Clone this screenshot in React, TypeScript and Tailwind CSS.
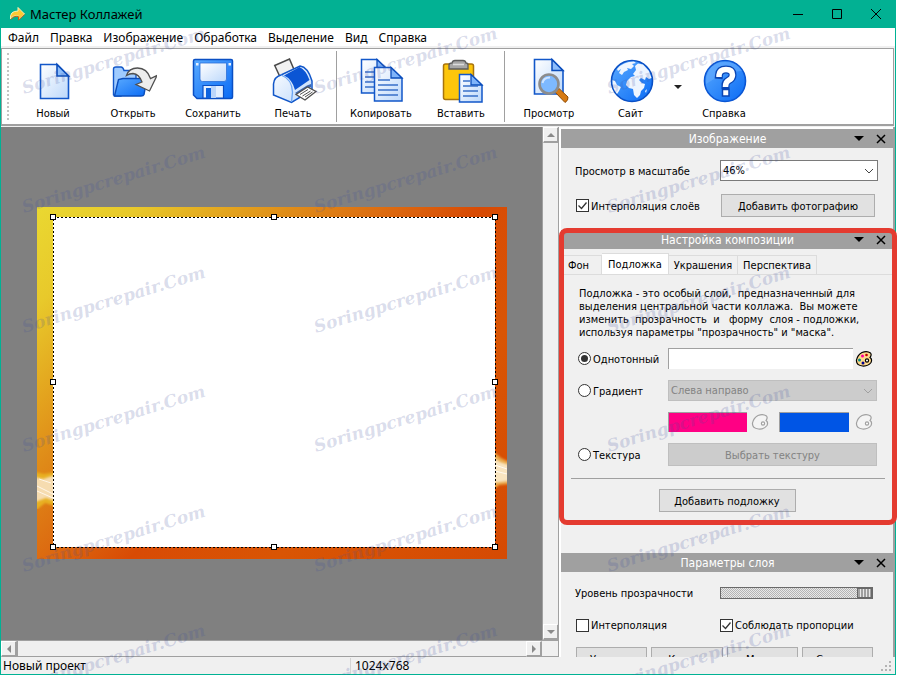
import React, { useState } from 'react';

const TAHOMA = "font-['DejaVu_Sans_Condensed','DejaVu_Sans',sans-serif]";
const SEGOE = "font-['Noto_Sans','Open_Sans',sans-serif]";

const MENU = ['Файл', 'Правка', 'Изображение', 'Обработка', 'Выделение', 'Вид', 'Справка'];
const TABS = ['Фон', 'Подложка', 'Украшения', 'Перспектива'];

const NewIcon = () => (
  <svg viewBox="0 0 48 48" className="size-12">
    <path d="M11.5 7.5H28L39.5 19V41.5H11.5Z" fill="url(#paper)" stroke="#1257c9" strokeWidth="1.6" />
    <path d="M28 7.5V19H39.5Z" fill="#8dbdfb" stroke="#0b4dbb" strokeWidth="1.6" />
  </svg>
);

const OpenIcon = () => (
  <svg viewBox="0 0 48 48" className="size-12">
    <path d="M4.5 38V12Q4.5 10 7 10H12Q14 10 15 13.5H27V22L12 39H6Z" fill="#9fcbff" stroke="#1257c9" strokeWidth="1.4" />
    <path d="M5.5 39L9.5 22.5L14 21.5H38L35 37.5Q34.5 39 32 39Z" fill="url(#blue)" stroke="#0b4dbb" strokeWidth="1.4" />
    <path d="M17.5 18.5Q20 11 28.5 11Q38 11 41.5 21.5L48 18.5L40.5 34L27 27.5L33 25Q30 17 24 16.5Q20.5 16.5 17.5 18.5Z" fill="#ededed" stroke="#505050" strokeWidth="1.3" />
  </svg>
);

const SaveIcon = () => (
  <svg viewBox="0 0 48 48" className="size-12">
    <path d="M6 2.5H42Q43.5 2.5 43.5 4V40Q43.5 41.5 42 41.5H8L4.5 38V4Q4.5 2.5 6 2.5Z" fill="url(#blue)" stroke="#0a4fc4" strokeWidth="1.5" />
    <path d="M11 6H37.5V22Q37.5 24.5 35 24.5H13.5Q11 24.5 11 22Z" fill="url(#paper)" stroke="#2b6fd8" strokeWidth=".8" />
    <path d="M7 6h2.5v2.5H7zM39.5 6H42v2.5h-2.5z" fill="#e8f1ff" />
    <path d="M14 41V28.5H34.5V41Z" fill="#e3efff" stroke="#0a4fc4" strokeWidth="1.2" />
    <path d="M17 31H22V41H17Z" fill="#0d63df" />
    <path d="M22 29H27V41H22Z" fill="#bcd6fa" />
  </svg>
);

const PrintIcon = () => (
  <svg viewBox="0 0 48 48" className="size-12">
    <path d="M5.7 8.5L20.5 2L26 15L12 22Z" fill="#f1f1f1" stroke="#4a4a4a" strokeWidth="1.5" />
    <path d="M4.5 27Q5 20 12 18L31 9Q39 10 43 24V33L22.5 45.5L4.5 38Z" fill="url(#paper)" stroke="#1257c9" strokeWidth="1.5" />
    <path d="M15 18.5L30.5 10Q37 13 40.5 23L26 33Q23 22 15 18.5Z" fill="#0b55d4" />
    <path d="M12 18Q23 22 23.5 35L22.5 45" fill="none" stroke="#6ba5f3" strokeWidth="1.3" />
    <path d="M26 36L38 28.5L42 27V30L29 38Z" fill="#3d67ad" />
    <path d="M27 37.5L38.5 30L47 34.5L36 43Z" fill="#fff" stroke="#505050" strokeWidth="1.3" />
    <path d="M31 37.5L39 32.5M33.5 39L41.5 34M36 40L43.5 35" stroke="#505050" />
  </svg>
);

const Sheet = ({ x, y, w, h }: { x: number; y: number; w: number; h: number }) => (
  <g transform={`translate(${x} ${y})`}>
    <path d={`M.5 .5H${w - 11}L${w} 11V${h}H.5Z`} fill="url(#paper)" stroke="#1257c9" strokeWidth="1.5" />
    <path d={`M${w - 11} .5V11H${w}Z`} fill="#7fb4fa" stroke="#0b4dbb" strokeWidth="1.3" />
    {[0, 1, 2, 3].map((i) => (
      <path key={i} d={`M4 ${h - 6 - i * 5}H${i === 3 ? w - 12 : w - 4}`} stroke="#2b66c4" strokeWidth="1.4" />
    ))}
  </g>
);

const CopyIcon = () => (
  <svg viewBox="0 0 48 48" className="size-12">
    <Sheet x={4} y={2} w={27} h={34} />
    <Sheet x={17} y={10} w={28} h={34} />
  </svg>
);

const PasteIcon = () => (
  <svg viewBox="0 0 48 48" className="size-12">
    <rect x="6.5" y="7" width="30" height="35.5" rx="2" fill="#fdc60b" stroke="#a8730c" strokeWidth="1.5" />
    <path d="M12 12V8Q12 6 15 6Q15.5 3.5 18 3.5H26Q28.5 3.5 29 6Q31 6 31 8V12Z" fill="#a6a6a6" stroke="#5c5c5c" strokeWidth="1.3" />
    <path d="M16 7.5H27" stroke="#dcdcdc" strokeWidth="1.5" />
    <Sheet x={22} y={17} w={23} h={28} />
  </svg>
);

const PreviewIcon = () => (
  <svg viewBox="0 0 48 48" className="size-12">
    <path d="M9.5 2.5H27L38 13.5V37H9.5Z" fill="url(#paper)" stroke="#1257c9" strokeWidth="1.6" />
    <path d="M27 2.5V13.5H38Z" fill="#8dbdfb" stroke="#0b4dbb" strokeWidth="1.5" />
    <path d="M30 35L34 31.5L43 40Q43.5 43.5 40 45.5Z" fill="#d77a12" stroke="#8f4d09" />
    <circle cx="24" cy="27" r="9.5" fill="#7db9ff" stroke="#8c8c8c" strokeWidth="2.6" />
    <path d="M17.5 26Q18.5 20.5 25 20.5" fill="none" stroke="#cfe4ff" strokeWidth="2" />
  </svg>
);

const GlobeIcon = () => (
  <svg viewBox="0 0 48 48" className="size-12">
    <circle cx="25" cy="24" r="20.5" fill="url(#blue)" stroke="#0a4fc4" strokeWidth="1.6" />
    <path d="M10 12Q16 4.5 27 4.5L29 6L25 7L27 9L24 12L20 11L21 13L17 15L15 18L12 16L14 12L11 14Z" fill="#eef5ff" />
    <path d="M5.5 23L8 24L10 28L14 30L12 34L10 37Q5 31 5.5 23Z" fill="#eef5ff" />
    <path d="M31 6.5L36 7.5L42 14L44.5 21L42 22L39 20L38 23L34 21L32 23L35 26L38 27L37 31L34 34L33 38L30 41L27 38L26 32L22 31L19 28L20 24L24 20L28 19L26 17L29 13L28 9Z" fill="#eef5ff" />
    <path d="M38 34L40 32L39 36Z" fill="#eef5ff" />
  </svg>
);

const HelpIcon = () => (
  <svg viewBox="0 0 48 48" className="size-12">
    <circle cx="25" cy="24" r="20.5" fill="url(#blue)" stroke="#0a56d4" strokeWidth="1.6" />
    <path d="M6 27Q6 6 25 5Q37 5 42 14Q24 14 6 27Z" fill="#6cb0ff" opacity=".5" />
    <path d="M19 18Q19.5 12.5 26 12.5Q32.5 12.500 32.5 18Q32.5 21.5 28.5 23.500Q25.5 25 25.5 28" fill="none" stroke="#0a46b4" strokeWidth="8" strokeLinecap="square" />
    <path d="M22.5 32.5h6.5v6.5h-6.5z" fill="#fff" stroke="#0a46b4" strokeWidth="1.5" />
    <path d="M19 20V18Q19.5 12.5 26 12.5Q32.5 12.5 32.5 18Q32.5 21.5 28.5 23.5Q25.5 25 25.5 30" fill="none" stroke="#fff" strokeWidth="5.5" />
  </svg>
);

const TOOLS: { label: string; icon: React.FC; sep?: boolean; arrow?: boolean }[] = [
  { label: 'Новый', icon: NewIcon },
  { label: 'Открыть', icon: OpenIcon },
  { label: 'Сохранить', icon: SaveIcon },
  { label: 'Печать', icon: PrintIcon, sep: true },
  { label: 'Копировать', icon: CopyIcon },
  { label: 'Вставить', icon: PasteIcon, sep: true },
  { label: 'Просмотр', icon: PreviewIcon },
  { label: 'Сайт', icon: GlobeIcon, arrow: true },
  { label: 'Справка', icon: HelpIcon },
];

const SharedDefs = () => (
  <svg className="absolute size-0">
    <defs>
      <linearGradient id="paper" x1="0" y1="0" x2="1" y2="1">
        <stop offset="0" stopColor="#ffffff" />
        <stop offset="1" stopColor="#bcd8fb" />
      </linearGradient>
      <linearGradient id="blue" x1="0" y1="0" x2="1" y2="1">
        <stop offset="0" stopColor="#5aaaff" />
        <stop offset="1" stopColor="#0a6bf5" />
      </linearGradient>
    </defs>
  </svg>
);

const Palette = ({ disabled }: { disabled?: boolean }) => (
  <svg viewBox="0 0 18 16" className="h-4 w-[18px]">
    <path
      d="M7 1.5Q12 -.5 15.5 2Q17 4 15 6.5Q17.5 8 16 11.5Q13 15.5 7.5 15Q1 14 1.5 9Q2.5 4 7 1.5Z"
      fill={disabled ? '#f4f4f4' : '#ffd98a'}
      stroke={disabled ? '#a0a0a0' : '#000'}
      strokeWidth="1.2"
    />
    {!disabled && (
      <>
        <circle cx="7.5" cy="5" r="1.5" fill="#ff00a0" />
        <circle cx="11.5" cy="4" r="1.3" fill="#c00000" />
        <circle cx="4.5" cy="9" r="1.5" fill="#008a8a" />
        <circle cx="8" cy="12" r="1.5" fill="#000090" />
      </>
    )}
    <circle cx="12" cy="9.5" r="1.6" fill="#fff" stroke={disabled ? '#a0a0a0' : '#000'} strokeWidth="1.2" />
  </svg>
);

const PanelHeader = ({ title }: { title: string }) => (
  <header className={`flex h-[19px] shrink-0 items-center bg-[#a0a0a0] pr-[7px] pl-10 text-xs text-white ${TAHOMA}`}>
    <h2 className="flex-1 text-center">{title}</h2>
    <button aria-label="Свернуть" className="mr-3">
      <svg viewBox="0 0 10 10" className="size-2.5"><path d="M0 2H10L5 7Z" fill="#000" /></svg>
    </button>
    <button aria-label="Закрыть">
      <svg viewBox="0 0 10 10" className="size-2.5"><path d="M1 1L9 9M9 1L1 9" stroke="#000" strokeWidth="1.5" /></svg>
    </button>
  </header>
);

const CheckBox = ({ label, defaultChecked }: { label: string; defaultChecked?: boolean }) => (
  <label className="flex items-center gap-0.5">
    <span className="grid">
      <input type="checkbox" defaultChecked={defaultChecked} className="peer size-[13px] appearance-none border border-[#333] bg-white [grid-area:1/1]" />
      <svg viewBox="0 0 13 13" className="pointer-events-none hidden size-[13px] [grid-area:1/1] peer-checked:block">
        <path d="M2.5 6.5L5.5 9.5L10.5 3.5" fill="none" stroke="#333" strokeWidth="1.3" />
      </svg>
    </span>
    <span className="pt-0.5">{label}</span>
  </label>
);

const Radio = ({ label, checked, onChange }: { label: string; checked: boolean; onChange: () => void }) => (
  <label className="flex w-[90px] shrink-0 items-center gap-0.5">
    <span className="grid">
      <input type="radio" name="fill" checked={checked} onChange={onChange} className="peer size-[13px] appearance-none rounded-full border border-[#333] bg-white [grid-area:1/1]" />
      <span className="pointer-events-none hidden size-[7px] place-self-center rounded-full bg-[#333] [grid-area:1/1] peer-checked:block" />
    </span>
    <span className="pt-0.5">{label}</span>
  </label>
);

const Select = ({ value, label, disabled }: { value: string; label: string; disabled?: boolean }) => (
  <div className="grid flex-1">
    <select
      aria-label={label}
      disabled={disabled}
      className="h-[21px] w-full appearance-none border border-[#7a7a7a] bg-white px-0.5 leading-none [grid-area:1/1] disabled:border-[#bfbfbf] disabled:bg-[#cccccc] disabled:text-[#838383] disabled:opacity-100"
    >
      <option>{value}</option>
    </select>
    <svg viewBox="0 0 10 6" className="pointer-events-none mr-1 h-1.5 w-2.5 self-center justify-self-end [grid-area:1/1]">
      <path d="M1 1L5 5L9 1" fill="none" stroke={disabled ? '#a0a0a0' : '#444'} />
    </svg>
  </div>
);

const Button = ({ className = '', ...rest }: React.ButtonHTMLAttributes<HTMLButtonElement>) => (
  <button {...rest} className={`h-[23px] border border-[#adadad] bg-[#e1e1e1] pt-0.5 disabled:border-[#bfbfbf] disabled:bg-[#cccccc] disabled:text-[#838383] ${className}`} />
);

const ScrollButton = ({ label, d }: { label: string; d: string }) => (
  <button aria-label={label} className="grid size-4 shrink-0 place-items-center border border-r-2 border-b-2 border-[#a0a0a0] border-t-white border-l-white bg-[#f0f0f0]">
    <svg viewBox="0 0 8 8" className="size-2"><path d={d} fill="#8a8a8a" /></svg>
  </button>
);

const HANDLES = [
  'left-0 top-0', 'left-1/2 top-0', 'left-full top-0',
  'left-0 top-1/2', 'left-full top-1/2',
  'left-0 top-full', 'left-1/2 top-full', 'left-full top-full',
];

const Collage = () => (
  <div className="relative h-[352px] w-[470px] bg-[linear-gradient(135deg,#ead831_0%,#e8c92b_12%,#e3a31e_24%,#df8a18_32%,#dc6810_44%,#d84b05_54%,#d95504_72%,#d54a03_100%)] pt-2.5 pr-3 pb-3 pl-4">
    <svg viewBox="0 0 16 40" className="absolute top-[262px] left-0 h-10 w-4">
      <g className="blur-[1px]">
        <path d="M-2 3L7 5L18 3V37L8 34L-2 42Z" fill="#e8b022" />
        <path d="M-2 8L6 10L18 6V32L9 29L-2 33Z" fill="#f6dcb0" />
      </g>
      <path d="M0 17L16 25M0 22L16 29M2 10L14 14" stroke="#fff6e8" />
    </svg>
    <svg viewBox="0 0 12 40" className="absolute top-[244px] right-0 h-10 w-3">
      <g className="blur-[1px]">
        <path d="M-2 0L6 7L14 11V33L4 34L-2 39Z" fill="#e9a94a" />
        <path d="M-2 6L5 11L14 14V30L-2 32Z" fill="#f9e5c0" />
      </g>
      <path d="M0 14L12 18M0 20L12 23" stroke="#fffaf0" />
    </svg>
    <div className="relative h-full bg-white">
      <svg className="absolute inset-0 size-full overflow-visible">
        <rect width="100%" height="100%" fill="none" stroke="#000" strokeWidth="1" strokeDasharray="2 2" shapeRendering="crispEdges" />
      </svg>
      {HANDLES.map((pos) => (
        <span key={pos} className={`absolute size-1.5 -translate-1/2 border border-black bg-white ${pos}`} />
      ))}
    </div>
  </div>
);

const Watermark = () => (
  <svg className="pointer-events-none absolute inset-0 size-full" aria-hidden="true">
    {[94, 213, 333, 452, 572, 691].flatMap((y) =>
      [24, 316, 609].map((x) => (
        <text
          key={`${x}-${y}`}
          transform={`translate(${x} ${y}) rotate(-17)`}
          className="fill-[#3f4f9e]/20 font-['DejaVu_Serif',serif] text-[17px] font-bold italic"
        >
          Soringpcrepair.Com
        </text>
      ))
    )}
  </svg>
);

const App = () => {
  const [tab, setTab] = useState('Подложка');
  const [fill, setFill] = useState('solid');

  return (
    <div className="relative h-screen overflow-hidden bg-white pr-0.5 text-black">
      <SharedDefs />
      <div className={`flex h-full flex-col border border-t-0 border-[#00b294] bg-[#f0f0f0] ${SEGOE}`}>
        <header className="flex h-7 shrink-0 items-center bg-[#02b193] pl-2">
          <svg viewBox="0 0 16 16" className="size-4">
            <path d="M1.5 13Q.5 5 9 5V1.5L15.5 8L9.5 13.5V10Q4 9 1.5 13Z" fill="#ffc933" stroke="#fff0b8" />
            <path d="M2 13.5Q4.5 9.5 9.5 10.5V14L15.5 8.5" fill="none" stroke="#c9600c" />
          </svg>
          <h1 className="flex-1 pt-0.5 pl-[5px] text-[13px]">Мастер Коллажей</h1>
          <button aria-label="Свернуть окно" className="grid w-[39px] place-items-center">
            <svg viewBox="0 0 10 10" className="size-2.5"><path d="M0 5.5H10" stroke="#000" /></svg>
          </button>
          <button aria-label="Развернуть окно" className="grid w-[39px] place-items-center">
            <svg viewBox="0 0 10 10" className="size-2.5"><path d="M.5 .5H9.5V9.5H.5Z" fill="none" stroke="#000" /></svg>
          </button>
          <button aria-label="Закрыть окно" className="grid w-[39px] place-items-center">
            <svg viewBox="0 0 10 10" className="size-2.5"><path d="M0 0L10 10M10 0L0 10" stroke="#000" /></svg>
          </button>
        </header>

        <nav className="flex h-5 shrink-0 items-center gap-[11px] border-b-2 border-[#f0f0f0] bg-white pt-0.5 pl-[7px] text-xs">
          {MENU.map((item) => (
            <button key={item}>{item}</button>
          ))}
        </nav>

        <div className={`mr-px flex h-[78px] shrink-0 border border-b-2 border-[#a0a0a0] bg-white pl-[5px] text-[11px] ${TAHOMA}`}>
          <div className="my-1 mr-1 w-0 border-l-2 border-dotted border-[#c4c4c4]" />
          {TOOLS.map(({ label, icon: Icon, sep, arrow }) => (
            <React.Fragment key={label}>
              <button className={`flex flex-col items-center pt-2 ${arrow ? 'w-[83px]' : 'w-20'}`}>
                <Icon />
                <span className="pt-px leading-4">{label}</span>
              </button>
              {arrow && (
                <button aria-label="Список сайтов" className="flex w-3 items-center justify-center">
                  <svg viewBox="0 0 8 4" className="h-1 w-2"><path d="M0 0H8L4 4Z" fill="#222" /></svg>
                </button>
              )}
              {sep && <div className="my-0.5 mr-1 ml-[3px] w-px bg-[#a0a0a0]" />}
            </React.Fragment>
          ))}
        </div>

        <div className="flex min-h-0 flex-1 pt-px">
          <main className="flex min-w-0 flex-1 flex-col">
            <div className="flex min-h-0 flex-1">
              <div className="flex min-w-0 flex-1 items-center justify-center bg-[#808080] pb-0.5 pl-px">
                <Collage />
              </div>
              <div className="flex w-4 flex-col justify-between border-l border-[#a0a0a0]">
                <ScrollButton label="Вверх" d="M0 6H8L4 2Z" />
                <ScrollButton label="Вниз" d="M0 2H8L4 6Z" />
              </div>
            </div>
            <div className="flex h-[17px] border-y border-[#a0a0a0] pr-4">
              <ScrollButton label="Влево" d="M6 0V8L2 4Z" />
              <div className="flex-1 border-l border-[#a0a0a0]" />
              <ScrollButton label="Вправо" d="M2 0V8L6 4Z" />
            </div>
          </main>

          <aside className={`flex w-[337px] shrink-0 flex-col border-r-2 border-l border-[#a0a0a0] text-[11px] leading-4 ${TAHOMA}`}>
            <section className="flex h-[103px] shrink-0 flex-col border-t-2 border-l-2 border-white">
              <PanelHeader title="Изображение" />
              <div className="flex items-center pt-3 pr-[15px] pl-3.5">
                <span className="w-[145px] pt-0.5">Просмотр в масштабе</span>
                <Select label="Просмотр в масштабе" value="46%" />
              </div>
              <div className="flex items-center pt-[13px] pr-[18px] pl-[15px]">
                <div className="w-[145px]"><CheckBox label="Интерполяция слоёв" defaultChecked /></div>
                <Button className="flex-1">Добавить фотографию</Button>
              </div>
            </section>

            <section className="relative flex h-[323px] shrink-0 flex-col border-l-2 border-white">
              <PanelHeader title="Настройка композиции" />
              <div role="tablist" className="flex h-[26px] items-end border-b border-[#dcdcdc] pl-0.5">
                {TABS.map((name) => (
                  <button
                    key={name}
                    role="tab"
                    aria-selected={tab === name}
                    onClick={() => setTab(name)}
                    className="h-[19px] border border-b-0 border-l-0 border-[#dcdcdc] px-[5px] pt-px first:pr-3 aria-selected:h-[21px] aria-selected:bg-white aria-selected:px-1.5"
                  >
                    {name}
                  </button>
                ))}
              </div>
              <div className="pt-3 pr-3 pl-3.5">
                <p className="pl-1 leading-[13px] whitespace-pre">
                  Подложка - это особый слой,  предназначенный для<br />
                  выделения центральной части коллажа.  Вы можете<br />
                  изменить  прозрачность  и   форму  слоя - подложки,<br />
                  используя параметры "прозрачность" и "маска".
                </p>
                <div className="flex flex-col gap-[11px] pt-[9px] pr-1 pl-[3px]">
                  <div className="flex items-center">
                    <Radio label="Однотонный" checked={fill === 'solid'} onChange={() => setFill('solid')} />
                    <input aria-label="Цвет" readOnly className="h-[21px] min-w-0 flex-1 border-t border-l border-[#a0a0a0] bg-white" />
                    <button aria-label="Выбрать цвет" className="ml-0.5 w-[22px]"><Palette /></button>
                  </div>
                  <div className="flex items-center">
                    <Radio label="Градиент" checked={fill === 'gradient'} onChange={() => setFill('gradient')} />
                    <Select label="Направление градиента" value="Слева направо" disabled />
                  </div>
                  <div className="flex items-center pl-[90px]">
                    <div className="h-5 flex-[80] border-t border-l border-[#a0a0a0] bg-[#ff0084]" />
                    <button aria-label="Первый цвет" disabled className="mx-1 w-6"><Palette disabled /></button>
                    <div className="h-5 flex-[70] border-t border-l border-[#a0a0a0] bg-[#0055e5]" />
                    <button aria-label="Второй цвет" disabled className="ml-1.5 w-[22px]"><Palette disabled /></button>
                  </div>
                  <div className="flex items-center">
                    <Radio label="Текстура" checked={fill === 'texture'} onChange={() => setFill('texture')} />
                    <Button disabled className="flex-1">Выбрать текстуру</Button>
                  </div>
                </div>
              </div>
              <hr className="mt-3 mr-2 ml-2.5 border-t border-[#a0a0a0]" />
              <Button className="mt-2.5 w-[137px] self-center">Добавить подложку</Button>
              <div className="pointer-events-none absolute -top-0.5 -right-1 -left-0.5 z-10 h-[297px] rounded-lg border-[5px] border-[#e43b30]" />
            </section>

            <section className="flex min-h-0 flex-1 flex-col overflow-hidden border-l-2 border-white">
              <PanelHeader title="Параметры слоя" />
              <div className="flex items-center pt-3 pr-5 pl-3.5">
                <label htmlFor="opacity" className="w-[145px] pt-0.5">Уровень прозрачности</label>
                <input
                  id="opacity"
                  type="range"
                  defaultValue={100}
                  className="h-3 min-w-0 flex-1 appearance-none border border-[#696969] bg-[length:2px_2px] bg-[repeating-conic-gradient(#b4b4b4_0_25%,#e8e8e8_0_50%)] [&::-webkit-slider-thumb]:h-2.5 [&::-webkit-slider-thumb]:w-[15px] [&::-webkit-slider-thumb]:appearance-none [&::-webkit-slider-thumb]:border [&::-webkit-slider-thumb]:border-[#696969] [&::-webkit-slider-thumb]:bg-[repeating-linear-gradient(90deg,#a0a0a0_0_2px,#e8e8e8_2px_3px)]"
                />
              </div>
              <div className="flex items-center pt-3.5 pl-[15px]">
                <div className="w-36"><CheckBox label="Интерполяция" /></div>
                <CheckBox label="Соблюдать пропорции" defaultChecked />
              </div>
              <div className="flex gap-1 pt-[13px] pr-5 pl-[15px]">
                <Button className="flex-1">Удалить</Button>
                <Button className="flex-1">Контур</Button>
                <Button className="flex-1">Маска</Button>
                <Button className="flex-1">Создать</Button>
              </div>
            </section>
          </aside>
        </div>

        <footer className="flex h-[17px] shrink-0 items-center text-xs leading-4">
          <span className="w-[350px] border-r border-[#d4d4d4] pl-0.5">Новый проект</span>
          <span className="flex-1 pl-1">1024x768</span>
          <svg viewBox="0 0 10 10" className="mr-1 size-2.5">
            <path d="M8 0h2v2H8zM4 4h2v2H4zM8 4h2v2H8zM0 8h2v2H0zM4 8h2v2H4zM8 8h2v2H8z" fill="#b4b4b4" />
          </svg>
        </footer>
      </div>
      <Watermark />
    </div>
  );
};

export default App;
